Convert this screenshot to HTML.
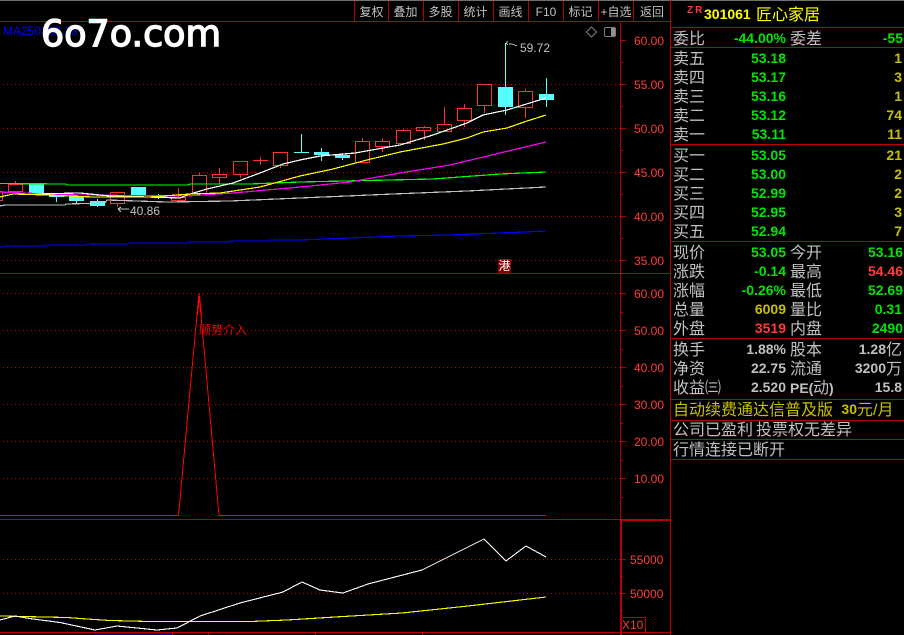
<!DOCTYPE html>
<html><head><meta charset="utf-8"><style>
html,body{margin:0;padding:0;background:#000;width:904px;height:635px;overflow:hidden}
svg{display:block}
text{font-family:"Liberation Sans","WenQuanYi Zen Hei","Noto Sans CJK SC",sans-serif;white-space:pre}
.l{shape-rendering:crispEdges;fill:none}
.ax{font-size:12px;fill:#ff3c3c}
.tb{font-size:12px;fill:#c0c0c0;text-anchor:middle}
.c{font-size:16px;fill:#c0c0c0;font-family:"WenQuanYi Zen Hei","Noto Sans CJK SC",sans-serif}
.n{font-size:14px;font-weight:bold;text-anchor:end}
.g{fill:#00e600}.r{fill:#ff3c3c}.y{fill:#c8c000}.w{fill:#c0c0c0}
</style></head><body>
<svg width="904" height="635" viewBox="0 0 904 635" xmlns="http://www.w3.org/2000/svg">
<rect width="904" height="635" fill="#000"/>
<rect x="0" y="0" width="904" height="1" fill="#707070"/>
<!-- dotted grid -->
<path class="l" stroke="#c00000" stroke-dasharray="1 3" d="M3 84.5H620M3 128.5H620M3 172.5H620M3 216.5H620M3 260.5H620M3 293.5H620M3 330.5H620M3 367.5H620M3 404.5H620M3 441.5H620M3 478.5H620M3 559.5H620M3 593.5H620"/>
<!-- frame -->
<path class="l" stroke="#b80000" d="M0 21.5H670M0 273.5H670M0 519.5H620M0 632.5H670M620.5 21V635M670.5 0V635M354.5 1V21M388.5 1V21M423.5 1V21M458.5 1V21M493.5 1V21M528.5 1V21M563.5 1V21M598.5 1V21M633.5 1V21M620 40.5h6M620 62.5h3M620 84.5h6M620 106.5h3M620 128.5h6M620 150.5h3M620 172.5h6M620 194.5h3M620 216.5h6M620 238.5h3M620 260.5h6M620 293.5h6M620 312.5h3M620 330.5h6M620 349.5h3M620 367.5h6M620 386.5h3M620 404.5h6M620 423.5h3M620 441.5h6M620 460.5h3M620 478.5h6M620 497.5h3M620 559.5h6M620 576.5h3M620 593.5h6M620 610.5h3M172.5 632V635M208.5 632V635M315.5 632V635M422.5 632V635"/>
<rect x="620" y="519" width="50" height="2" fill="#b80000"/>
<rect x="620" y="519" width="2" height="116" fill="#b80000"/>
<rect x="94" y="633" width="78" height="2" fill="#000080"/>
<rect x="620.5" y="617.5" width="25" height="15" fill="none" stroke="#b80000" class="l"/>
<!-- toolbar -->
<text class="tb" x="371.5" y="16">复权</text><text class="tb" x="405.5" y="16">叠加</text><text class="tb" x="440.5" y="16">多股</text><text class="tb" x="475.5" y="16">统计</text><text class="tb" x="510.5" y="16">画线</text><text class="tb" x="546" y="16">F10</text><text class="tb" x="580.5" y="16">标记</text><text class="tb" x="616" y="16">+自选</text><text class="tb" x="652" y="16">返回</text>
<!-- y axis -->
<g class="ax"><text x="634" y="45">60.00</text><text x="634" y="89">55.00</text><text x="634" y="133">50.00</text><text x="634" y="177">45.00</text><text x="634" y="221">40.00</text><text x="634" y="265">35.00</text><text x="634" y="298">60.00</text><text x="634" y="335">50.00</text><text x="634" y="372">40.00</text><text x="634" y="409">30.00</text><text x="634" y="446">20.00</text><text x="634" y="483">10.00</text><text x="630" y="564">55000</text><text x="630" y="598">50000</text><text x="622" y="629">X10</text></g>
<!-- candles -->
<path class="l" stroke="#ff3232" d="M-5 191.5h7.5v9h-7.5M8.5 184.5h14v7h-14zM110.5 192.5h14v11h-14zM171.5 197.5h14v3h-14zM192.5 175.5h14v18h-14zM212.5 174.5h14v3h-14zM233.5 161.5h14v13h-14zM253 160.5h15M273.5 152.5h14v13h-14zM355.5 141.5h14v21h-14zM375.5 141.5h14v5h-14zM396.5 130.5h14v13h-14zM416.5 127.5h14v3h-14zM437.5 124.5h14v7h-14zM457.5 108.5h14v12h-14zM477.5 84.5h14v21h-14zM518.5 91.5h14v16h-14zM15.5 181V184M117.5 204V207M178.5 188V197M199.5 173V175M219.5 168V174M219.5 178V184M240.5 175V178M260.5 157V165M280.5 166V168M362.5 138V141M382.5 138V141M382.5 147V152M403.5 129V130M424.5 126V127M424.5 131V140M444.5 107V124M464.5 104V108M464.5 121V127M484.5 106V113M525.5 89V91M525.5 108V118"/>
<g class="l" style="fill:#54ffff"><rect x="29" y="183" width="15" height="10"/><rect x="49" y="194" width="15" height="3"/><rect x="69" y="196" width="15" height="5"/><rect x="90" y="201" width="15" height="5"/><rect x="131" y="187" width="15" height="8"/><rect x="151" y="195" width="15" height="3"/><rect x="294" y="152" width="15" height="1"/><rect x="314" y="152" width="15" height="3"/><rect x="335" y="155" width="15" height="3"/><rect x="498" y="87" width="15" height="20"/><rect x="539" y="94" width="15" height="6"/></g>
<path class="l" stroke="#54ffff" d="M56.5 197V202M76.5 201V203M97.5 199V207M158.5 194V199M301.5 134V152M321.5 148V161M342.5 153V160M505.5 43V115M546.5 78V107"/>
<!-- MA lines -->
<g class="l" stroke-width="1.2">
<polyline stroke="#0000ff" points="0,247 5,247 5,246 46,246 46,245 87,245 87,244 128,244 128,243 189,243 189,242 230,242 230,241 270,241 270,240 300,240 350,238 400,236 450,235 500,233 546,231"/>
<polyline stroke="#c0c0c0" points="0,206 5,205 65,205 66,204 105,203 107,200 167,202 168,202 230,201 300,198 393,194 467,191 546,187"/>
<polyline stroke="#00ff00" points="0,183.5 66,184 67,185 188,185 190,184 250,184 300,182 433,179 500,174 546,172"/>
<polyline stroke="#ff00ff" points="0,192 47,194 80,195 187,196 233,193 300,187 350,182 400,173 450,165 500,153 546,142"/>
<polyline stroke="#ffffff" points="35,194 80,193 110,196 150,197 180,198 187,195 207,189 233,183 260,173 283,164 300,160 320,156 355,153 400,145 433,135 467,123 483,115 507,110 533,102 546,98"/>
<polyline stroke="#ffff00" points="0,197 13,194 47,195 93,197 150,197 190,194 220,193 260,187 300,176 333,169 367,160 400,152 443,144 467,138 483,132 507,128 527,121 546,115"/>
</g>
<!-- annotations -->
<text x="3" y="35" font-size="12" fill="#0000ff">MA250: 38.33</text>
<text x="41" y="46" font-size="36.5" fill="#fff" stroke="#fff" stroke-width="1.4" style="font-family:'DejaVu Sans',sans-serif">6o7o.com</text>
<path class="l" stroke="#c0c0c0" d="M506 42h2M506 43l2 2M509 44h3l5 2M118 209h11M118 209l3-2M118 209l3 3"/>
<text x="520" y="52" font-size="12" fill="#c0c0c0">59.72</text>
<text x="130" y="215" font-size="12" fill="#c0c0c0">40.86</text>
<path d="M591.5 27l5 5-5 5-5-5z" fill="none" stroke="#808080"/>
<rect x="604.5" y="27.5" width="11" height="9" rx="1.5" fill="#000" stroke="#808080"/>
<rect x="611" y="28" width="4" height="8" fill="#909090"/>
<rect x="498" y="259" width="13" height="14" fill="#800000"/>
<text x="498.5" y="270" font-size="12" fill="#fff" style="font-family:'WenQuanYi Zen Hei','Noto Sans CJK SC',sans-serif">港</text>
<!-- middle indicator -->
<path fill="none" stroke="#ff0000" stroke-width="1" shape-rendering="crispEdges" d="M0 515.5H178.5L199 293 219 515.5H546"/>
<path fill="none" stroke="#ff0000" stroke-width="1" shape-rendering="crispEdges" d="M197.5 315L199.5 296 201.5 315"/>
<text x="199" y="334" font-size="12" fill="#f00000" style="font-family:'WenQuanYi Zen Hei','Noto Sans CJK SC',sans-serif">顺势介入</text>
<!-- bottom indicator -->
<g class="l" stroke-width="1.1">
<polyline stroke="#ffff00" points="0,616 67,617.5 87,619 110,620.5 150,621.5 250,621.5 287,620 335,617 402,613 468,606 546,597"/>
<polyline stroke="#ffffff" points="0,620 15,616 33,619 60,622.5 95,630 117,626 157,630 177,628 200,616 240,603 283,592 302,582 320,590 335,592 343,593 368,584 422,570 448,557 484,539 506,561 526,546 546,557"/>
</g>
<!-- right panel -->
<path class="l" stroke="#b80000" d="M670 27.5H904M670 47.5H904M670 144.5H904M670 241.5H904M670 338.5H904M670 399.5H904M670 420.5H904M670 439.5H904M670 459.5H904"/>
<text x="687" y="13" font-size="10" font-weight="bold" fill="#ff3c3c" letter-spacing="2">ZR</text>
<text x="704" y="19" font-size="14" font-weight="bold" fill="#ffff00">301061</text>
<text class="c" x="756" y="20" style="fill:#ffff00">匠心家居</text>
<g class="c">
<text x="673" y="44">委比</text><text x="790" y="44">委差</text>
<text x="673" y="64">卖五</text><text x="673" y="83">卖四</text><text x="673" y="102">卖三</text><text x="673" y="121">卖二</text><text x="673" y="140">卖一</text>
<text x="673" y="161">买一</text><text x="673" y="180">买二</text><text x="673" y="199">买三</text><text x="673" y="218">买四</text><text x="673" y="237">买五</text>
<text x="673" y="258">现价</text><text x="790" y="258">今开</text>
<text x="673" y="277">涨跌</text><text x="790" y="277">最高</text>
<text x="673" y="296">涨幅</text><text x="790" y="296">最低</text>
<text x="673" y="315">总量</text><text x="790" y="315">量比</text>
<text x="673" y="334">外盘</text><text x="790" y="334">内盘</text>
<text x="673" y="355">换手</text><text x="790" y="355">股本</text>
<text x="673" y="374">净资</text><text x="790" y="374">流通</text>
<text x="673" y="393">收益㈢</text>
<text x="886" y="355">亿</text><text x="886" y="374">万</text>
<text x="673" y="415" style="fill:#c8c000">自动续费通达信普及版</text><text x="857" y="415" style="fill:#c8c000">元/月</text>
<text x="673" y="435">公司已盈利</text><text x="756" y="435">投票权无差异</text>
<text x="673" y="455">行情连接已断开</text>
</g>
<text x="790" y="393" font-size="14" font-weight="bold" fill="#c0c0c0">PE(</text><text class="c" x="813" y="393">动</text><text x="829" y="393" font-size="14" font-weight="bold" fill="#c0c0c0">)</text>
<g class="n">
<text class="g" x="786" y="43">-44.00%</text><text class="g" x="903" y="43">-55</text>
<text class="g" x="786" y="63">53.18</text><text class="y" x="902" y="63">1</text>
<text class="g" x="786" y="82">53.17</text><text class="y" x="902" y="82">3</text>
<text class="g" x="786" y="101">53.16</text><text class="y" x="902" y="101">1</text>
<text class="g" x="786" y="120">53.12</text><text class="y" x="902" y="120">74</text>
<text class="g" x="786" y="139">53.11</text><text class="y" x="902" y="139">11</text>
<text class="g" x="786" y="160">53.05</text><text class="y" x="902" y="160">21</text>
<text class="g" x="786" y="179">53.00</text><text class="y" x="902" y="179">2</text>
<text class="g" x="786" y="198">52.99</text><text class="y" x="902" y="198">2</text>
<text class="g" x="786" y="217">52.95</text><text class="y" x="902" y="217">3</text>
<text class="g" x="786" y="236">52.94</text><text class="y" x="902" y="236">7</text>
<text class="g" x="786" y="257">53.05</text><text class="g" x="903" y="257">53.16</text>
<text class="g" x="786" y="276">-0.14</text><text class="r" x="903" y="276">54.46</text>
<text class="g" x="786" y="295">-0.26%</text><text class="g" x="903" y="295">52.69</text>
<text class="y" x="786" y="314">6009</text><text class="g" x="902" y="314">0.31</text>
<text class="r" x="786" y="333">3519</text><text class="g" x="903" y="333">2490</text>
<text class="w" x="786" y="354">1.88%</text><text class="w" x="886" y="354">1.28</text>
<text class="w" x="786" y="373">22.75</text><text class="w" x="886" y="373">3200</text>
<text class="w" x="786" y="392">2.520</text><text class="w" x="902" y="392">15.8</text>
<text class="y" x="857" y="414">30</text>
</g>
</svg>
</body></html>
